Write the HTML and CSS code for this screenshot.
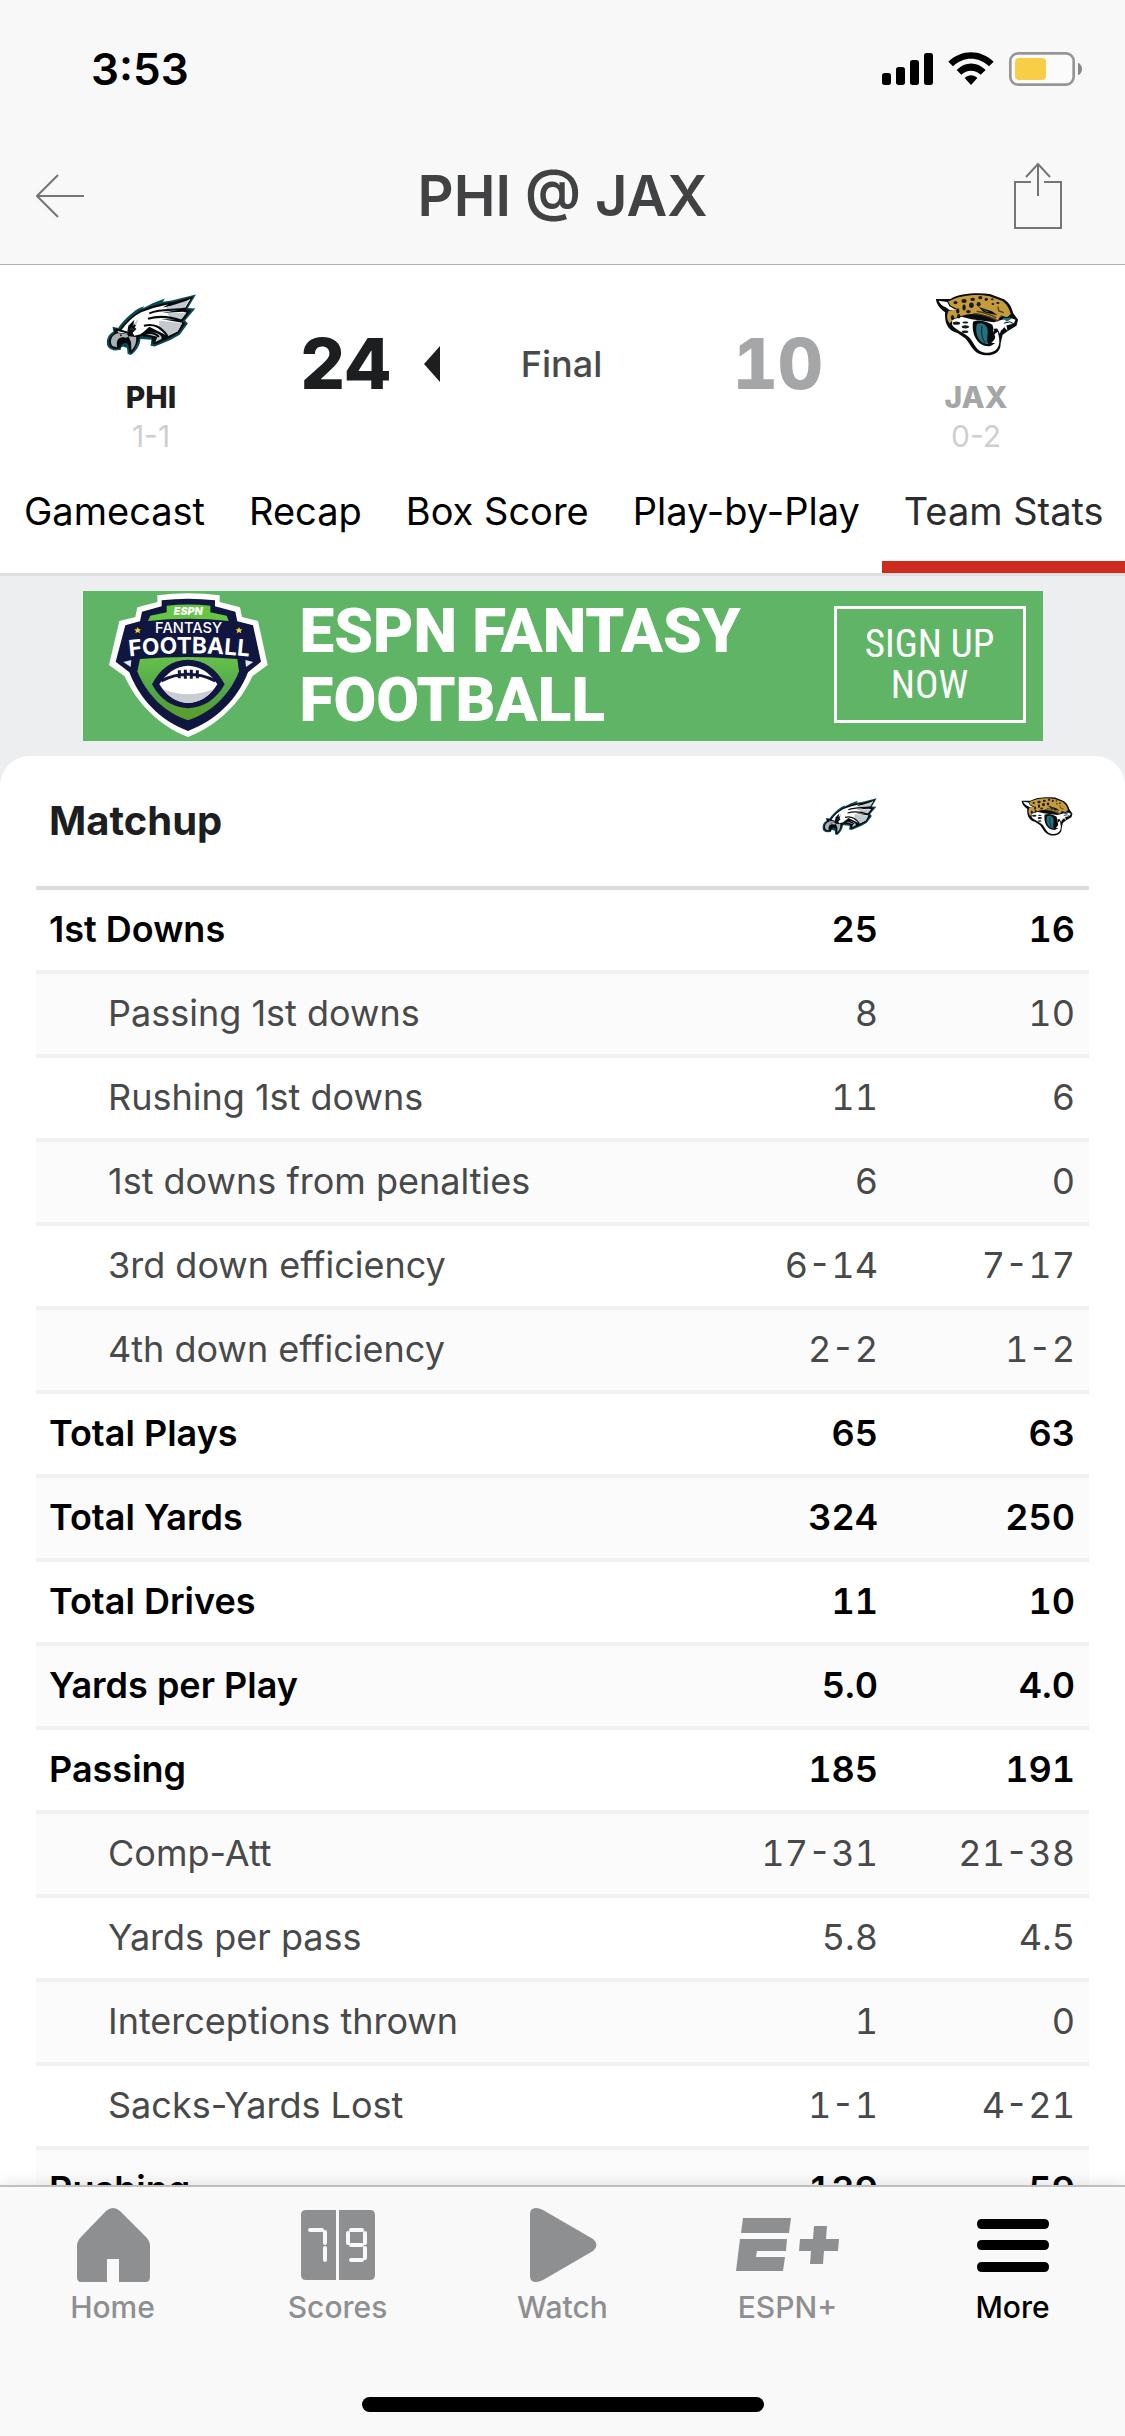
FILE: index.html
```html
<!DOCTYPE html>
<html lang="en">
<head>
<meta charset="utf-8">
<meta name="viewport" content="width=device-width, initial-scale=1">
<title>PHI @ JAX - Team Stats</title>
<link rel="stylesheet" href="styles.css">
</head>
<body>
<svg class="sprite" aria-hidden="true">
  <symbol id="eagle" viewBox="22 24 272 186">
    <path fill="#0b4a53" d="M25 176C23 158 31 145 44 138L41 124L58 127C72 108 92 86 118 70L136 62L130 70L160 54L196 40L190 50L216 46L288 28L264 68L286 70L256 105L264 114L240 147L214 162L166 182L154 180L156 162L124 160C122 178 114 194 96 207L86 204L84 186C76 184 70 180 66 186L66 192L50 194C36 192 27 186 25 176Z"/>
    <path fill="#070b0d" d="M31 174C29 160 36 150 47 142L46 129L62 132C78 110 98 90 122 76L158 62L192 54L224 50L280 34L258 72L274 75L248 108L257 115L236 142L212 156L168 176L160 174L158 156L126 151C118 154 118 178 97 201L91 198L88 176C78 166 66 174 64 187L50 189C38 187 33 182 31 174Z"/>
    <path fill="#fff" d="M56 135L66 136C82 112 102 94 126 81L162 68L205 58L190 67L244 57L272 41L255 70L188 83L250 79L260 82L243 103L185 101L247 112L234 137L205 151L150 124L126 145L106 150L98 138L84 144L58 141Z"/>
    <path fill="#c3c9ce" d="M200 66L270 44L253 68L198 80ZM204 83L260 82L243 103L210 98ZM180 105L247 113L234 137L206 150L178 134ZM138 145C164 134 190 146 186 160L168 169L174 153ZM90 130L118 100L110 124Z"/>
    <path fill="#a9b0b6" d="M37 171C35 157 45 144 59 143L84 146C92 153 86 158 74 155C60 153 51 163 55 184C43 184 38 180 37 171ZM88 152L111 154C113 174 104 188 97 193L96 169Z"/>
    <path fill="none" stroke="#070b0d" stroke-width="6" d="M150 84C188 69 222 77 256 70M146 100C186 88 218 96 246 106M134 121C164 113 184 124 204 151M52 132L90 142L108 118M126 147C148 137 172 143 178 154"/>
    <path fill="#070b0d" d="M85 138L88 121L106 103L102 121L112 130L100 142Z"/>
    <path fill="none" stroke="#0b6570" stroke-width="3" d="M94 130L104 131"/>
    <circle cx="66" cy="149" r="3" fill="#222"/>
  </symbol>
  <symbol id="jaguar" viewBox="34 24 250 190">
    <path fill="#080c0e" d="M35 42L79 42C105 25 160 22 198 27L240 43C259 55 263 68 268 84L283 105L278 123L251 139L236 151L230 177C232 201 209 216 178 211C145 205 140 177 124 161L100 145C72 137 60 116 63 82C48 72 37 59 35 42Z"/>
    <path fill="#fff" d="M43 47L69 51L76 64L96 75L76 75L66 68C54 63 47 56 43 47ZM84 105L112 96L142 103L210 112L237 104L264 101L275 105L270 116L247 122L232 137L226 119L211 123L210 149L222 141L226 163C229 193 210 207 184 204C156 201 151 174 136 158C121 145 88 132 84 120Z"/>
    <path fill="#c69b3b" d="M72 50C107 30 157 25 197 34L236 48C253 61 257 75 261 87L249 98L229 95L222 107L195 94L159 86L129 89L108 94L89 101L77 116C66 104 68 87 73 78L99 72L79 62Z"/>
    <path fill="#080c0e" d="M147 111C165 101 191 111 211 123L208 137L214 157L222 170L200 184C166 190 141 155 147 111Z"/>
    <path fill="#267080" d="M158 119C170 110 184 118 190 129C195 151 184 168 194 178C166 179 152 148 158 119Z"/>
    <path fill="none" stroke="#091f26" stroke-width="3" d="M174 124C171 145 174 162 184 174"/>
    <path fill="#fff" d="M205 119L225 117L235 124L228 147L220 131L209 132ZM238 119L247 119L251 138L244 130ZM202 174C213 167 215 158 216 150L224 166L221 176Z"/>
    <g fill="#171a18"><ellipse cx="94" cy="53" rx="6" ry="5"/><ellipse cx="120" cy="48" rx="8" ry="6"/><ellipse cx="146" cy="43" rx="7" ry="5"/><ellipse cx="169" cy="38" rx="6" ry="5"/><ellipse cx="142" cy="61" rx="7" ry="8"/><ellipse cx="164" cy="58" rx="6" ry="7"/><ellipse cx="120" cy="68" rx="5" ry="9"/><ellipse cx="101" cy="78" rx="5" ry="8"/><ellipse cx="85" cy="98" rx="5" ry="8"/><ellipse cx="104" cy="94" rx="5" ry="7"/><ellipse cx="133" cy="80" rx="7" ry="5"/><ellipse cx="187" cy="43" rx="5" ry="5"/><ellipse cx="205" cy="43" rx="4" ry="3"/><ellipse cx="222" cy="54" rx="5" ry="3"/><ellipse cx="207" cy="57" rx="4" ry="3"/><ellipse cx="97" cy="115" rx="11" ry="5"/><ellipse cx="124" cy="126" rx="11" ry="5"/><ellipse cx="123" cy="141" rx="10" ry="4"/><ellipse cx="124" cy="113" rx="9" ry="3"/></g>
    <path fill="#080c0e" d="M164 66L185 73L204 79L221 91L203 87L180 82Z"/>
    <path fill="#267080" d="M174 72L194 80L189 82ZM236 100L258 95L261 103L249 111Z"/>
    <path fill="none" stroke="#513d1d" stroke-width="4" d="M148 86C176 88 203 97 223 109M158 79C184 84 201 89 217 99M222 65L225 78L240 83"/>
    <path fill="none" stroke="#080c0e" stroke-width="3" d="M231 93L249 99L265 94M240 115L258 111L276 120"/>
  </symbol>
</svg>

<div class="app">
  <header class="topbar">
    <div class="status">
      <time class="clock">3:53</time>
      <svg class="status-icons" viewBox="66 66 600 102" role="img" aria-label="Signal, Wi-Fi, battery">
        <g><rect x="66" y="129" width="27" height="36" rx="8"/><rect x="108" y="111" width="27" height="54" rx="8"/><rect x="150" y="90" width="27" height="75" rx="8"/><rect x="192" y="69" width="27" height="96" rx="8"/></g>
        <path d="M265 95C304 57 362 57 401 95L387 109C356 79 310 79 279 109ZM290 120C315 94 351 94 377 120L362 134C345 118 321 118 304 134ZM314 144C326 133 341 133 352 144L333 165Z"/>
        <rect x="451" y="70" width="190" height="94" rx="23" fill="#fbfbfb" stroke="#969696" stroke-width="8"/>
        <rect x="465" y="84" width="93" height="66" rx="12" fill="#f7ce46"/>
        <path fill="#888" d="M654 98C670 105 670 129 654 136Z"/>
      </svg>
    </div>
    <div class="titlebar">
      <button class="icon-button" aria-label="Back"><svg class="back" viewBox="0 0 48 44"><path d="M48 22H1M22 1L1 22L22 43"/></svg></button>
      <h1 class="title">PHI @ JAX</h1>
      <button class="icon-button icon-button-end" aria-label="Share"><svg class="share" viewBox="0 0 48 66"><path d="M17 19H1V65H47V19H30M24 33V1M12 14L24 1L36 14"/></svg></button>
    </div>
  </header>

  <section class="scoreboard" aria-label="Final score">
    <div class="team">
      <svg class="logo"><use href="#eagle"/></svg>
      <span class="abbr">PHI</span>
      <span class="record">1-1</span>
    </div>
    <div class="result">
      <div class="winner"><span class="points">24</span><svg class="pointer" viewBox="0 0 16 36"><path d="M0 18L16 0V36Z"/></svg></div>
      <span class="state">Final</span>
      <span class="points points-lost">10</span>
    </div>
    <div class="team team-lost">
      <svg class="logo"><use href="#jaguar"/></svg>
      <span class="abbr">JAX</span>
      <span class="record">0-2</span>
    </div>
  </section>

  <nav class="tabs" aria-label="Game sections">
    <a class="tab" href="#gamecast">Gamecast</a>
    <a class="tab" href="#recap">Recap</a>
    <a class="tab" href="#boxscore">Box Score</a>
    <a class="tab" href="#plays">Play-by-Play</a>
    <a class="tab tab-active" href="#stats" aria-current="page">Team Stats</a>
  </nav>

  <main class="content">
    <aside class="promo">
      <svg class="badge" viewBox="112 40 480 436" role="img" aria-label="ESPN Fantasy Football">
        <defs>
          <linearGradient id="turf" x1="0" y1="0" x2="0" y2="1"><stop offset="0" stop-color="#67c04a"/><stop offset=".55" stop-color="#50a64a"/><stop offset="1" stop-color="#5d9a28"/></linearGradient>
          <path id="arc" d="M150 236Q352 210 562 236"/>
        </defs>
        <path fill="#fff" d="M260 49Q352 36 447 49V69L508 85L514 114L562 126L591 258L545 292C510 372 440 440 352 474C264 440 198 372 162 292L115 258L146 126L194 114L200 85L260 69Z"/>
        <path fill="#10163f" d="M273 64Q352 55 433 64V82L494 98L500 127L547 139L571 248L532 280C501 361 435 425 352 456C269 425 207 361 176 280L135 248L164 139L208 127L214 98L273 82Z"/>
        <path fill="#65c643" d="M288 80Q352 73 419 80V100L468 110L474 126Q352 112 232 126L239 110L288 100Z"/>
        <path fill="url(#turf)" d="M208 240Q352 228 500 240L505 277C480 345 420 403 352 424C284 403 226 345 200 277Z"/>
        <text class="badge-espn" x="353" y="109">ESPN</text>
        <text class="badge-fantasy" x="354" y="161">FANTASY</text>
        <text class="badge-football"><textPath href="#arc" startOffset="50%">FOOTBALL</textPath></text>
        <path fill="#f2d43a" d="M201 144L204 151H211L206 156L208 163L201 159L194 163L196 156L191 151H198ZM505 144L508 151H515L510 156L512 163L505 159L498 163L500 156L495 151H502Z"/>
        <path fill="#dfe5ec" d="M158 249L182 243L180 264ZM548 249L524 243L526 264Z"/>
        <path fill="#10163f" d="M244 316Q280 244 352 242Q424 244 462 316Q424 384 352 388Q280 384 244 316Z"/>
        <path fill="#fff" d="M266 316Q300 262 352 260Q406 262 440 316Q406 370 352 372Q300 370 266 316Z"/>
        <path fill="#c9cdd3" d="M276 330Q352 362 430 330Q400 370 352 372Q306 370 276 330Z"/>
        <path fill="none" stroke="#10163f" stroke-width="9" d="M272 306Q310 286 352 286Q396 286 434 306M326 274V298M344 272V299M362 272V299M380 274V298"/>
      </svg>
      <strong class="promo-title">ESPN FANTASY FOOTBALL</strong>
      <a class="promo-cta" href="#signup">SIGN UP NOW</a>
    </aside>

    <section class="card" id="stats">
      <table class="stats">
        <thead>
          <tr><th class="heading" scope="col">Matchup</th><th class="num" scope="col" aria-label="PHI"><svg class="logo-small"><use href="#eagle"/></svg></th><th class="num" scope="col" aria-label="JAX"><svg class="logo-small"><use href="#jaguar"/></svg></th></tr>
        </thead>
        <tbody>
          <tr class="total"><th scope="row">1st Downs</th><td>25</td><td>16</td></tr>
          <tr><th scope="row">Passing 1st downs</th><td>8</td><td>10</td></tr>
          <tr><th scope="row">Rushing 1st downs</th><td>11</td><td>6</td></tr>
          <tr><th scope="row">1st downs from penalties</th><td>6</td><td>0</td></tr>
          <tr><th scope="row">3rd down efficiency</th><td>6-14</td><td>7-17</td></tr>
          <tr><th scope="row">4th down efficiency</th><td>2-2</td><td>1-2</td></tr>
          <tr class="total"><th scope="row">Total Plays</th><td>65</td><td>63</td></tr>
          <tr class="total"><th scope="row">Total Yards</th><td>324</td><td>250</td></tr>
          <tr class="total"><th scope="row">Total Drives</th><td>11</td><td>10</td></tr>
          <tr class="total"><th scope="row">Yards per Play</th><td>5.0</td><td>4.0</td></tr>
          <tr class="total"><th scope="row">Passing</th><td>185</td><td>191</td></tr>
          <tr><th scope="row">Comp-Att</th><td>17-31</td><td>21-38</td></tr>
          <tr><th scope="row">Yards per pass</th><td>5.8</td><td>4.5</td></tr>
          <tr><th scope="row">Interceptions thrown</th><td>1</td><td>0</td></tr>
          <tr><th scope="row">Sacks-Yards Lost</th><td>1-1</td><td>4-21</td></tr>
          <tr class="total"><th scope="row">Rushing</th><td>139</td><td>59</td></tr>
        </tbody>
      </table>
    </section>
  </main>

  <footer class="bottom">
    <nav class="dock" aria-label="Main">
      <a class="dock-item" href="#home"><svg class="dock-icon" viewBox="0 0 76 76"><path d="M31 4Q38-2 45 4L71 30Q75 34 75 39V70Q75 75 71 75H44V52H32V75H6Q2 75 2 70V39Q2 34 6 30Z"/></svg>Home</a>
      <a class="dock-item" href="#scores"><svg class="dock-icon" viewBox="0 0 76 76"><path d="M6 3H36V73H6Q1 73 1 68V8Q1 3 6 3ZM39 3H70Q75 3 75 8V68Q75 73 70 73H39Z"/><path class="segments" d="M10 23H22M25 25V36M25 41V53M51 23H62M48 26V36M65 26V36M51 38H62M65 41V51M51 53H62"/></svg>Scores</a>
      <a class="dock-item" href="#watch"><svg class="dock-icon" viewBox="0 0 76 76"><path d="M5 7Q5 1 11 1Q14 1 18 3L68 32Q75 38 68 44L18 73Q14 75 11 75Q5 75 5 69Z"/></svg>Watch</a>
      <a class="dock-item" href="#plus"><svg class="dock-icon dock-icon-wide" viewBox="0 0 104 76"><path d="M7 11H55L53 26H5ZM4 32H51L50 44H21L20 50H49L47 64H0ZM78 19H91L90 32H103L102 44H88L87 57H74L75 44H63L64 32H77Z"/></svg>ESPN+</a>
      <a class="dock-item dock-active" href="#more" aria-current="page"><svg class="dock-icon" viewBox="0 0 76 76"><path d="M7 12H69Q74 12 74 17T69 22H7Q2 22 2 17T7 12ZM7 33H69Q74 33 74 38T69 43H7Q2 43 2 38T7 33ZM7 55H69Q74 55 74 60T69 65H7Q2 65 2 60T7 55Z"/></svg>More</a>
    </nav>
    <div class="home-indicator"></div>
  </footer>
</div>
</body>
</html>
```
FILE: styles.css
```css
* { box-sizing: border-box; }

body {
  margin: 0;
  background: #edeef0;
  color: #1d1e1f;
  font-family: Inter, "Liberation Sans", sans-serif;
}

a { color: inherit; text-decoration: none; }

.sprite { display: block; width: 0; height: 0; }

.app {
  display: flex;
  flex-direction: column;
  height: 100vh;
}

.topbar {
  flex: none;
  background: #f8f8f8;
  border-bottom: 1px solid #b2b2b2;
}

.status {
  display: flex;
  align-items: center;
  justify-content: space-between;
  height: 138px;
  padding: 0 43px 0 91px;
}

.clock { color: #000; font-size: 44px; font-weight: 600; }
.status-icons { width: 200px; height: 34px; }

.titlebar {
  display: grid;
  grid-template-columns: 1fr auto 1fr;
  align-items: center;
  height: 126px;
  padding: 0 36px 11px;
}

.icon-button {
  display: flex;
  justify-self: start;
  padding: 0;
  border: 0;
  background: none;
}

.icon-button-end { justify-self: end; padding-right: 27px; }

.back, .share { fill: none; stroke: #737679; stroke-width: 2; }
.back { width: 48px; height: 44px; }
.share { width: 48px; height: 66px; }

.title {
  margin: 0;
  color: #414243;
  font-size: 56px;
  font-weight: 600;
}

.scoreboard {
  flex: none;
  display: grid;
  grid-template-columns: 300px 1fr 300px;
  align-items: center;
  padding: 28px 0 7px;
  background: #fff;
}

.team {
  display: flex;
  flex-direction: column;
  align-items: center;
  padding-left: 2px;
  font-size: 30px;
  line-height: 39px;
}

.logo { width: 92px; height: 63px; margin: 0 0 22px 2px; }
.abbr { font-weight: 800; }
.record { color: #cfcfd0; }
.team-lost .abbr { color: #a5a6a7; }

.result {
  display: grid;
  grid-template-columns: 1fr auto 1fr;
  align-items: center;
  padding: 0 2px 22px 0;
}

.winner { display: flex; align-items: center; gap: 34px; }
.points {
  font-size: 70px;
  font-variant-numeric: tabular-nums;
  font-weight: 800;
  line-height: 80px;
}
.points-lost { color: #a5a6a7; text-align: right; }
.pointer { width: 16px; height: 36px; fill: #1d1e1f; }
.state { color: #48494a; font-size: 36px; font-weight: 500; }

.tabs {
  flex: none;
  display: flex;
  justify-content: space-between;
  padding-left: 2px;
  background: #fff;
  border-bottom: 3px solid #dcdee0;
}

.tab {
  padding: 24px 22px 26px;
  border-bottom: 12px solid transparent;
  color: #000;
  font-size: 38px;
  line-height: 48px;
  white-space: nowrap;
}

.tab-active { border-color: #cc2b1d; color: #2b2c2d; }

.content {
  flex: 1;
  min-height: 0;
  overflow-y: auto;
  scrollbar-width: none;
}

.promo {
  display: flex;
  align-items: center;
  max-width: 960px;
  height: 150px;
  margin: 15px auto;
  padding: 0 17px 3px 25px;
  background: #5fb565;
  color: #fff;
}

.badge { flex: none; width: 160px; height: 146px; }
.badge text { fill: #fff; text-anchor: middle; }
.badge .badge-espn { font-size: 32px; font-style: italic; font-weight: 900; }
.badge .badge-fantasy { font-size: 44px; font-weight: 500; }
.badge .badge-football { font-size: 68px; font-weight: 700; }

.promo-title {
  flex: 1;
  padding-left: 32px;
  font-family: Roboto, sans-serif;
  font-size: 62px;
  font-weight: 900;
  line-height: 69px;
}

.promo-cta {
  display: flex;
  align-items: center;
  width: 192px;
  height: 117px;
  padding: 0 24px;
  border: 3px solid #fff;
  font-family: "Liberation Sans Narrow", "Roboto Condensed", Roboto, sans-serif;
  font-size: 39px;
  line-height: 41px;
  text-align: center;
}

.card {
  padding: 0 36px;
  background: #fff;
  border-radius: 30px 30px 0 0;
}

.stats {
  width: 100%;
  border-spacing: 0;
  table-layout: fixed;
  font-size: 36px;
}

.stats th, .stats td { padding: 0 0 2px; border-bottom: 4px solid #f1f1f1; }
.stats thead th { height: 134px; border-color: #dcdcdc; }
.stats .heading { padding-left: 13px; font-size: 40px; font-weight: 700; text-align: left; }
.stats .num { width: 197px; padding: 0 14px 14px 0; text-align: right; }
.logo-small { display: inline-block; width: 56px; height: 39px; vertical-align: middle; }

.stats tbody th, .stats td { height: 84px; color: #48494a; font-weight: 400; }
.stats tbody th { padding-left: 72px; text-align: left; }
.stats td { padding-right: 14px; font-variant-numeric: tabular-nums; text-align: right; }
.stats tbody tr:nth-child(even) { background: #fbfbfb; }
.stats .total th, .stats .total td { color: #000; font-weight: 600; }
.stats .total th { padding-left: 13px; }

.bottom {
  z-index: 1;
  flex: none;
  padding-bottom: 24px;
  background: #f9f9f9;
  border-top: 2px solid #bfbfbf;
  box-shadow: 0 0 16px rgba(0, 0, 0, 0.12);
}

.dock {
  display: grid;
  grid-template-columns: repeat(5, 1fr);
  height: 210px;
  padding-top: 20px;
}

.dock-item {
  display: flex;
  flex-direction: column;
  align-items: center;
  gap: 6px;
  color: #8e8f90;
  font-size: 30px;
  font-weight: 500;
  line-height: 36px;
}

.dock-icon { width: 76px; height: 76px; fill: currentColor; }
.dock-icon-wide { width: 104px; }
.segments { fill: none; stroke: #f9f9f9; stroke-width: 4; stroke-linecap: round; }
.dock-active { color: #000; }

.home-indicator {
  width: 402px;
  height: 15px;
  margin: 0 auto;
  border-radius: 8px;
  background: #000;
}
```
